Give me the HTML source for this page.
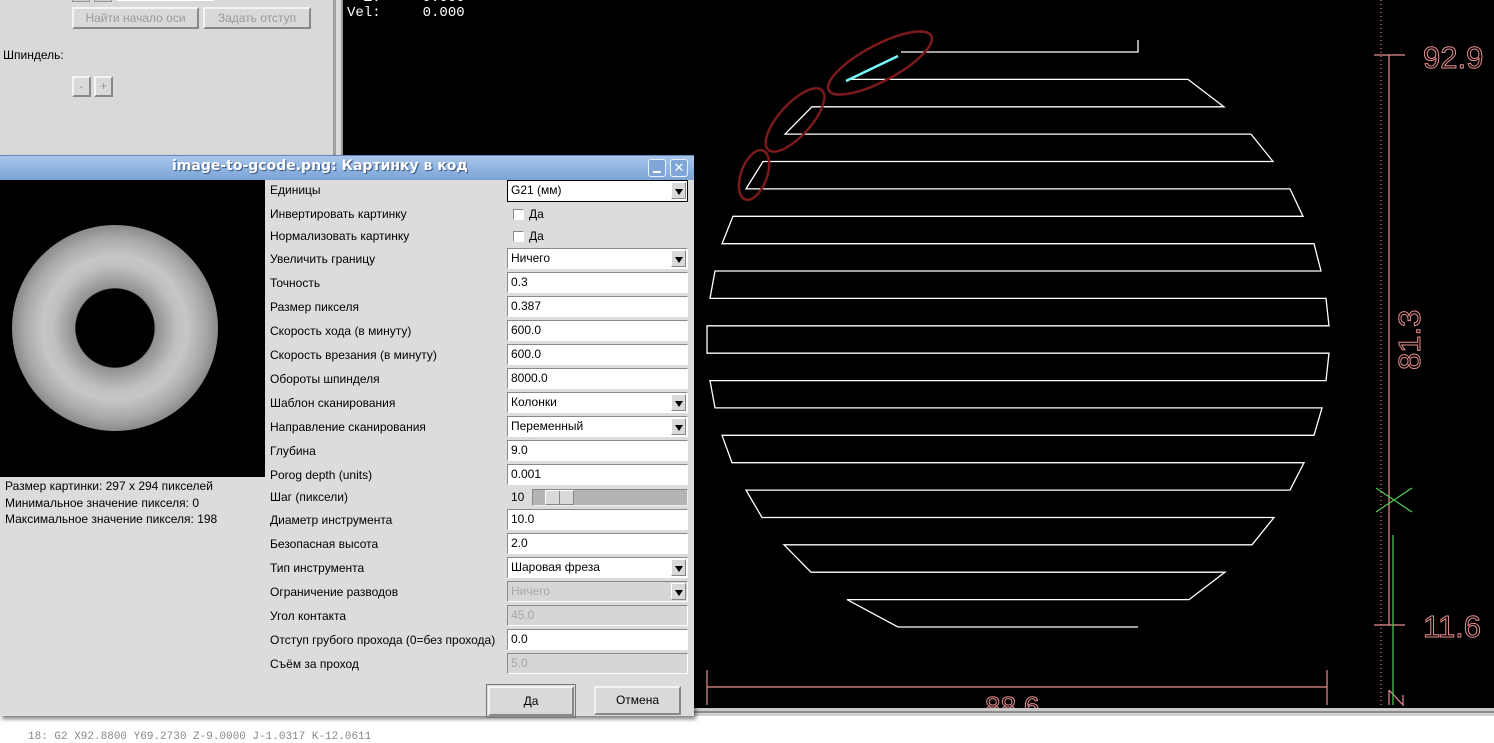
<!DOCTYPE html>
<html><head><meta charset="utf-8"><style>
*{margin:0;padding:0;box-sizing:border-box}
body{width:1494px;height:743px;overflow:hidden;position:relative;background:#fff;font-family:"Liberation Sans","DejaVu Sans",sans-serif;font-size:12px;color:#000}
.abs{position:absolute}
.btn{position:absolute;background:#d9d9d9;border:2px solid;border-color:#f4f4f4 #888 #888 #f4f4f4;color:#9a9a9a;text-align:center;font-size:12px}
.lbl{position:absolute;left:270px;font-size:12px;white-space:nowrap}
.inp{position:absolute;left:507px;width:181px;height:21px;background:#fff;border:1px solid;border-color:#8a8a8a #fff #fff #8a8a8a;padding-left:3px;font-size:12px;line-height:19px}
.dis{background:#d6d6d6;color:#a8a8a8}
.combo .arr{position:absolute;right:1px;top:1px;width:15px;height:17px;background:#d9d9d9;border:1px solid;border-color:#fff #888 #888 #fff}
.combo .arr:after{content:"";position:absolute;left:3px;top:6px;border-left:4px solid transparent;border-right:4px solid transparent;border-top:6px solid #000}
.cb{position:absolute;left:513px;width:11px;height:11px;background:#fff;border:1px solid;border-color:#888 #fff #fff #888}
.mono{font-family:"Liberation Mono","DejaVu Sans Mono",monospace}
</style></head><body>
<div class="abs" style="left:0;top:0;width:335px;height:716px;background:#d9d9d9"></div>
<div class="abs" style="left:333px;top:0;width:3px;height:716px;background:#a0a0a0"></div>
<div class="abs" style="left:336px;top:0;width:5px;height:716px;background:#d9d9d9"></div>
<div class="abs" style="left:341px;top:0;width:2px;height:716px;background:#9a9a9a"></div>
<div class="abs" style="left:72px;top:-6px;width:18px;height:8px;background:#ccc;border:1px solid #999"></div>
<div class="abs" style="left:94px;top:-6px;width:18px;height:8px;background:#ccc;border:1px solid #999"></div>
<div class="abs" style="left:117px;top:-6px;width:97px;height:7px;background:#fff"></div>
<div class="btn" style="left:72px;top:7px;width:127px;height:22px;line-height:18px">Найти начало оси</div>
<div class="btn" style="left:203px;top:7px;width:108px;height:22px;line-height:18px">Задать отступ</div>
<div class="abs" style="left:3px;top:48px;font-size:12px">Шпиндель:</div>
<div class="btn" style="left:72px;top:76px;width:19px;height:21px;line-height:17px">-</div>
<div class="btn" style="left:94px;top:76px;width:19px;height:21px;line-height:17px">+</div>
<div class="abs" style="left:343px;top:0;width:1151px;height:708px;background:#000"></div>
<div class="abs mono" style="left:347px;top:-9px;color:#fff;font-size:14px;line-height:15px;white-space:pre">  Z:     9.000
Vel:     0.000</div>
<svg class="abs" style="left:0;top:0" width="1494" height="708">
<path fill="none" stroke="#fff" stroke-width="1.3" d="M1138 40 L1138 52 L901 52 M848 79.4 L1188 79.4 L1224 106.8 L812 106.8 L785 134.1 L1251 134.1 L1273 161.5 L763 161.5 L746 188.9 L1290 188.9 L1303 216.3 L733 216.3 L722 243.7 L1314 243.7 L1321 271 L715 271 L710 298.4 L1326 298.4 L1329 325.8 L707 325.8 L707 353.2 L1329 353.2 L1326 380.6 L710 380.6 L715 407.9 L1322 407.9 L1314 435.3 L722 435.3 L732 462.7 L1304 462.7 L1290 490.1 L746 490.1 L762 517.5 L1274 517.5 L1252 544.8 L784 544.8 L811 572.2 L1225 572.2 L1189 599.6 L847 599.6 L898 627 L1138 627"/>
<path stroke="#7ff" stroke-width="2.5" d="M846 81 L898 56"/>
<g fill="none" stroke="#7a1a1a" stroke-width="2.5">
<ellipse cx="880" cy="63" rx="58" ry="18" transform="rotate(-28 880 63)"/>
<ellipse cx="795" cy="120" rx="40" ry="16" transform="rotate(-48 795 120)"/>
<ellipse cx="754" cy="175" rx="26" ry="13" transform="rotate(-70 754 175)"/>
</g>
<g stroke="#e88f8f" stroke-width="1.2" fill="none">
<line x1="1381" y1="0" x2="1381" y2="705" stroke-dasharray="1,3"/>
<line x1="1389" y1="55" x2="1389" y2="625"/>
<line x1="1374" y1="55" x2="1405" y2="55"/>
<line x1="1374" y1="625" x2="1405" y2="625"/>
<line x1="707" y1="687" x2="1327" y2="687"/>
<line x1="707" y1="670" x2="707" y2="705"/>
<line x1="1327" y1="670" x2="1327" y2="705"/>
<path d="M1389 690 V705 M1389 690 L1403 705 V695"/>
</g>
<g stroke="#5c5" stroke-width="1.2">
<line x1="1376" y1="512" x2="1412" y2="488"/>
<line x1="1376" y1="488" x2="1412" y2="512"/>
<line x1="1393" y1="535" x2="1393" y2="705"/>
</g>
<g fill="none" stroke="#e88f8f" stroke-width="1" font-family="Liberation Sans,sans-serif" font-size="31">
<text x="1423" y="68">92.9</text>
<text x="1423" y="637">11.6</text>
<text x="985" y="716" font-size="28">88.6</text>
<text transform="translate(1420 370) rotate(-90)" font-size="31">81.3</text>
</g>
</svg>
<div class="abs" style="left:0;top:708px;width:1494px;height:3px;background:#c9c9c9"></div>
<div class="abs" style="left:0;top:711px;width:1494px;height:2px;background:#8c8c8c"></div>
<div class="abs" style="left:0;top:713px;width:1494px;height:3px;background:#cfcfcf"></div>
<div class="abs mono" style="left:28px;top:731px;font-size:11px;color:#888;white-space:pre">18: G2 X92.8800 Y69.2730 Z-9.0000 J-1.0317 K-12.0611</div>
<div class="abs" style="left:0;top:155px;width:694px;height:561px;background:#dcdcdc;box-shadow:2px 3px 4px rgba(0,0,0,.5)"></div>
<div class="abs" style="left:0;top:155px;width:694px;height:25px;background:linear-gradient(#a9c6ec,#7aa4d6);border-top:1px solid #5f84b7"></div>
<div class="abs" style="left:172px;top:158px;font-size:14px;font-weight:bold;color:#fff;text-shadow:1px 1px 1px #34507a;font-family:'DejaVu Sans',sans-serif">image-to-gcode.png: Картинку в код</div>
<div class="abs" style="left:648px;top:159px;width:18px;height:18px;border:1px solid #e8f0fb;border-radius:3px;background:#7fa6d6"><div style="position:absolute;left:4px;top:11px;width:8px;height:2px;background:#fff"></div></div>
<div class="abs" style="left:670px;top:159px;width:18px;height:18px;border:1px solid #e8f0fb;border-radius:3px;background:#7fa6d6;color:#fff;font-size:13px;line-height:15px;text-align:center;font-weight:bold">✕</div>
<div class="abs" style="left:0;top:180px;width:265px;height:297px;background:#000"></div>
<div class="abs" style="left:12px;top:225px;width:206px;height:206px;border-radius:50%;background:radial-gradient(circle closest-side,#000 0,#000 38%,#909090 39%,#c0c0c0 60%,#c6c6c6 70%,#a8a8a8 88%,#8a8a8a 100%)"></div>
<div class="abs" style="left:5px;top:478px;line-height:16.5px;font-size:12px">Размер картинки: 297 x 294 пикселей<br>Минимальное значение пикселя: 0<br>Максимальное значение пикселя: 198</div>

<div class="lbl" style="top:183px">Единицы</div>
<div class="inp combo" style="top:180px;border:1px solid #000;height:22px">G21 (мм)<span class="arr"></span></div>
<div class="lbl" style="top:207px">Инвертировать картинку</div>
<div class="cb" style="top:209px"></div><div class="abs" style="left:529px;top:207px">Да</div>
<div class="lbl" style="top:229px">Нормализовать картинку</div>
<div class="cb" style="top:231px"></div><div class="abs" style="left:529px;top:229px">Да</div>
<div class="lbl" style="top:252px">Увеличить границу</div>
<div class="inp combo" style="top:248px">Ничего<span class="arr"></span></div>
<div class="lbl" style="top:276px">Точность</div>
<div class="inp" style="top:272px">0.3</div>
<div class="lbl" style="top:300px">Размер пикселя</div>
<div class="inp" style="top:296px">0.387</div>
<div class="lbl" style="top:324px">Скорость хода (в минуту)</div>
<div class="inp" style="top:320px">600.0</div>
<div class="lbl" style="top:348px">Скорость врезания (в минуту)</div>
<div class="inp" style="top:344px">600.0</div>
<div class="lbl" style="top:372px">Обороты шпинделя</div>
<div class="inp" style="top:368px">8000.0</div>
<div class="lbl" style="top:396px">Шаблон сканирования</div>
<div class="inp combo" style="top:392px">Колонки<span class="arr"></span></div>
<div class="lbl" style="top:420px">Направление сканирования</div>
<div class="inp combo" style="top:416px">Переменный<span class="arr"></span></div>
<div class="lbl" style="top:444px">Глубина</div>
<div class="inp" style="top:440px">9.0</div>
<div class="lbl" style="top:468px">Porog depth (units)</div>
<div class="inp" style="top:464px">0.001</div>
<div class="lbl" style="top:490px">Шаг (пиксели)</div>
<div class="abs" style="left:511px;top:490px">10</div>
<div class="abs" style="left:532px;top:489px;width:156px;height:17px;background:#b4b4b4;border:1px solid;border-color:#888 #eee #eee #888"></div>
<div class="abs" style="left:545px;top:490px;width:29px;height:15px;background:#d9d9d9;border:1px solid;border-color:#fff #888 #888 #fff"><div style="position:absolute;left:13px;top:0;width:1px;height:13px;background:#888"></div></div>
<div class="lbl" style="top:513px">Диаметр инструмента</div>
<div class="inp" style="top:509px">10.0</div>
<div class="lbl" style="top:537px">Безопасная высота</div>
<div class="inp" style="top:533px">2.0</div>
<div class="lbl" style="top:561px">Тип инструмента</div>
<div class="inp combo" style="top:557px">Шаровая фреза<span class="arr"></span></div>
<div class="lbl" style="top:585px">Ограничение разводов</div>
<div class="inp combo dis" style="top:581px">Ничего<span class="arr"></span></div>
<div class="lbl" style="top:609px">Угол контакта</div>
<div class="inp dis" style="top:605px">45.0</div>
<div class="lbl" style="top:633px">Отступ грубого прохода (0=без прохода)</div>
<div class="inp" style="top:629px">0.0</div>
<div class="lbl" style="top:657px">Съём за проход</div>
<div class="inp dis" style="top:653px">5.0</div>
<div class="abs" style="left:486px;top:684px;width:90px;height:34px;border:1px solid #777"></div>
<div class="btn" style="left:488px;top:686px;width:86px;height:30px;line-height:26px;color:#000">Да</div>
<div class="btn" style="left:594px;top:686px;width:87px;height:29px;line-height:25px;color:#000">Отмена</div>
</body></html>
